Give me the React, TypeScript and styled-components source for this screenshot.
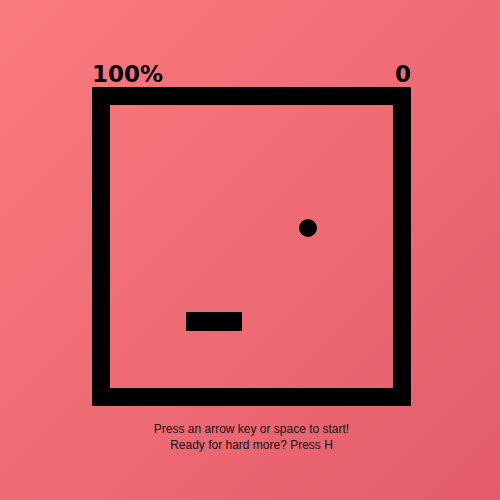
import React from "react";
import styled, { createGlobalStyle } from "styled-components";

const GlobalStyle = createGlobalStyle`
    html, body {
        margin: 0;
        padding: 0;
    }
    body {
        width: 500px;
        height: 500px;
        overflow: hidden;
        background: linear-gradient(to bottom right, #fa7b7e, #e45c6b);
    }
`

const Page = styled.div`
    display: flex;
    flex-direction: column;
    align-items: flex-start;
    padding: 61px 0 0 92px;
`

const Header = styled.div`
    display: flex;
    flex-direction: row;
    justify-content: space-between;
    width: 319px;
    height: 26px;
    font-family: "DejaVu Sans", Verdana, sans-serif;
    font-weight: bold;
    font-size: 23px;
    line-height: 26px;
    color: #000;
`

const Board = styled.div`
    position: relative;
    box-sizing: border-box;
    width: 319px;
    height: 319px;
    border: 18px solid #000;
`

const Paddle = styled.div`
    position: absolute;
    width: 56px;
    height: 19px;
    background: #000;
`

const Ball = styled.div`
    position: absolute;
    width: 18px;
    height: 18px;
    border-radius: 50%;
    background: #000;
`

const Hint = styled.div`
    width: 319px;
    margin-top: 15px;
    text-align: center;
    font-family: "Liberation Sans", Arial, sans-serif;
    font-size: 12px;
    line-height: 16px;
    color: #151515;
`

const App = () => {
    const paddle = { x: 76, y: 207 };
    const ball = { x: 189, y: 114 };

    return (
        <>
            <GlobalStyle />
            <Page>
                <Header>
                    <span>100%</span>
                    <span>0</span>
                </Header>
                <Board>
                    <Paddle style={{ left: paddle.x, top: paddle.y }} />
                    <Ball style={{ left: ball.x, top: ball.y }} />
                </Board>
                <Hint>
                    Press an arrow key or space to start!
                    <br />
                    Ready for hard more? Press H
                </Hint>
            </Page>
        </>
    )
};

export default App;
